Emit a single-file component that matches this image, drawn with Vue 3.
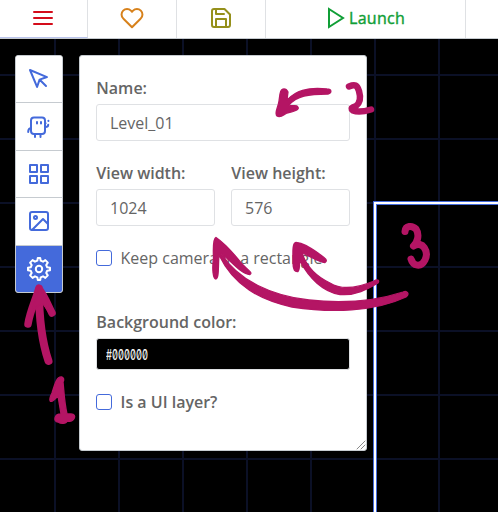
<script setup>
import { ref } from 'vue'

const levelName = ref('Level_01')
const viewWidth = ref('1024')
const viewHeight = ref('576')
const keepCamera = ref(false)
const uiLayer = ref(false)
const color = ref('#000000')
const tools = ['select', 'copies', 'tiles', 'backgrounds', 'settings']
const active = ref('settings')
</script>

<template>
  <div class="editor">
    <nav class="topbar">
      <button class="tab menu" aria-label="Menu">
        <svg viewBox="0 0 24 24"><path d="M3 12h18M3 6h18M3 18h18" /></svg>
      </button>
      <button class="tab heart" aria-label="Patrons">
        <svg viewBox="0 0 24 24"><path d="M20.84 4.61a5.5 5.5 0 0 0-7.78 0L12 5.67l-1.06-1.06a5.5 5.5 0 0 0-7.78 7.78l1.06 1.06L12 21.23l7.78-7.78 1.06-1.06a5.5 5.5 0 0 0 0-7.78z" /></svg>
      </button>
      <button class="tab save" aria-label="Save">
        <svg viewBox="0 0 24 24"><path d="M15.5 3H5a2 2 0 0 0-2 2v14a2 2 0 0 0 2 2h14a2 2 0 0 0 2-2V8.500zM7 3v5h8M7 21v-8h10v8" /></svg>
      </button>
      <button class="tab launch">
        <svg viewBox="0 0 24 24"><path d="M5 3l14 9-14 9z" /></svg>
        <span>Launch</span>
      </button>
      <div class="tab rest"></div>
    </nav>

    <main class="canvas">
      <div class="camera"></div>
      <aside class="toolbar">
        <button v-for="tool in tools" :key="tool" class="tool" :class="{ active: active === tool }" :aria-label="tool" @click="active = tool">
          <svg v-if="tool === 'select'" viewBox="0 0 24 24"><path d="M3 3l7.070 16.970 2.510-7.390 7.390-2.510zM13 13l6 6" /></svg>
          <svg v-else-if="tool === 'copies'" viewBox="0 0 24 24"><path d="M7 2.500h8a3 3 0 0 1 3 3V16a3 3 0 0 1-3 3H7a3 3 0 0 1-3-3V5.500a3 3 0 0 1 3-3zM10 7v1.600M14 7v1.600M8 20v2M13.500 20v2M4 13c-1.800.2-2.800 1.400-2.800 4M18.500 12c2 0 2.700-.6 2.700-2.200M18.500 8.300h.1M21.400 5.800v.1" /></svg>
          <svg v-else-if="tool === 'tiles'" viewBox="0 0 24 24"><path d="M3 3h7v7H3zM14 3h7v7h-7zM14 14h7v7h-7zM3 14h7v7H3z" /></svg>
          <svg v-else-if="tool === 'backgrounds'" viewBox="0 0 24 24"><rect x="3" y="3" width="18" height="18" rx="2" /><circle cx="8.500" cy="8.500" r="1.500" /><path d="M21 15l-5-5L5 21" /></svg>
          <svg v-else viewBox="0 0 24 24"><circle cx="12" cy="12" r="3.200" /><path d="M10.300 3.700 10.800 1h2.400l.5 2.700 2.300 1 2.300-1.600 2.500 2.500-1.600 2.400 1 2.300 2.800.5v2.400l-2.800.5-1 2.300 1.600 2.400-2.500 2.500-2.300-1.600-2.300 1-.5 2.700h-2.400l-.5-2.700-2.300-1-2.400 1.600-2.500-2.500 1.600-2.400-1-2.300L1 13.200v-2.400l2.700-.5 1-2.300-1.600-2.400 2.500-2.500L8 4.700z" /></svg>
        </button>
      </aside>

      <section class="panel">
        <label class="field name">
          <b>Name:</b>
          <input v-model="levelName" type="text" />
        </label>
        <div class="sizes">
          <label class="field"><b>View width:</b><input v-model="viewWidth" type="text" /></label>
          <label class="field"><b>View height:</b><input v-model="viewHeight" type="text" /></label>
        </div>
        <label class="check keep"><input v-model="keepCamera" type="checkbox" /><span>Keep camera in a rectangle</span></label>
        <div class="field background">
          <b>Background color:</b>
          <button class="swatch"><span>{{ color }}</span></button>
        </div>
        <label class="check ui"><input v-model="uiLayer" type="checkbox" /><b>Is a UI layer?</b></label>
        <svg class="grip" viewBox="0 0 10 10"><path d="M1 9 9 1M5 9 9 5" /></svg>
      </section>
    </main>

    <svg class="notes" viewBox="0 0 498 512">
      <path class="line head" d="M39 288C36 299 30 311 28 324M39 289C44 295 48 305 52 313" />
      <path class="line shaft" d="M39 290C39 316 41 339 48.500 361" />
      <path d="M39 288L31 316L37 306L43 304L50 314L46 298Z" />
      <path d="M62 377C57 376 55 383 52 393C48 401 50 404 55 399L58 396L61 414C54 414 53 422 58 422C61 424 66 424 67 421C74 423 78 414 71 414L67 414C64 400 64 390 63 382C64 380 64 378 62 377Z" />
      <path d="M284 89C280 89 280 94 279 101C278 108 274 113 277 116C281 118 283 115 287 113C292 112 300 110 298 107C297 104 292 107 289 105C297 96 308 94 328 94C332 93 332 89 327 89C306 87 296 91 287 100L288 92C287 90 286 89 284 89Z" />
      <path class="line two" d="M349 86.500C355 84 357 85 359 91C361 98 360 103 356 106Q349 108 353 110.500C359 113 366 111 371 109.500" />
      <path d="M216 237.500C214 238 213 247 213.500 258C212 269 213 279 216 279C219 278 218 268 219 255C234 286 260 300 292 307C331 313 374 312 406 297C410 294 407 290 403 292C375 301 344 304 309 300C273 296 238 281 221 253C231 261 242 275 250 274.500C253 273 248 270 242 264C234 254 227 245 216 237.500Z" />
      <path d="M296 242.500C292 243 293 253 293 263C293 270 295 272 298 271.500C300 270 299 264 300 261C309 278 323 292 340 294.500C355 296 368 289 378 283C380 280 377 279 374 281C355 289 341 290 330 283C315 276 306 265 302 253C310 256 320 263 325 262.500C329 260 323 257 318 253C309 247 303 243 296 242.500Z" />
      <path class="line digit" d="M405 231.500C405.500 225.500 412 225 416 229C420 235 417 243 413.500 246C423 240 429 252 425 260C421 268 413 266 411 259" />
    </svg>
  </div>
</template>

<style>
html, body { margin: 0; overflow: hidden; }
</style>

<style scoped>
* { box-sizing: border-box; }
.editor { position: relative; width: 498px; height: 512px; display: flex; flex-direction: column; font: 16px/24px "Open Sans", sans-serif; color: #656565; overflow: hidden; }
button { padding: 0; margin: 0; border: 0; background: white; font: inherit; }
svg { width: 24px; height: 24px; fill: none; stroke: currentColor; stroke-width: 2; stroke-linecap: round; stroke-linejoin: round; }
.topbar { flex: none; height: 39px; display: flex; background: white; border-bottom: 1px solid #c6cbd0; }
.tab { display: flex; align-items: center; justify-content: center; border-right: 1px solid #dfe1e4; }
.tab svg { margin-top: -2px; }
.menu { width: 88px; padding-right: 1px; color: #d40c1a; border-bottom: 1px solid #bac4ed; }
.menu svg { margin-top: -1px; }
.heart { width: 89px; padding-right: 1px; color: #d7811b; }
.save { width: 89px; justify-content: flex-start; padding-left: 32px; color: #95901b; }
.launch { width: 200px; justify-content: flex-start; padding-left: 58px; color: #109e36; }
.launch svg { stroke-linejoin: miter; }
.launch span { margin-top: -2px; padding-left: 1px; letter-spacing: .3px; -webkit-text-stroke: .4px currentColor; }
.rest { flex: 1; border: 0; }
.canvas { position: relative; flex: 1; display: flex; align-items: flex-start; gap: 16px; padding: 16px 0 0 15px; background-color: #000; background-image: linear-gradient(90deg, #0b1026 2px, transparent 2px), linear-gradient(#0b1026 2px, transparent 2px); background-size: 64px 64px; background-position: 54px 35px; }
.camera { position: absolute; left: 373px; top: 162px; width: 200px; height: 400px; border: 1px solid #446adb; box-shadow: inset 0 0 0 2px white, inset 0 0 0 3px #446adb; }
.toolbar { position: relative; width: 48px; height: 238px; flex: none; display: flex; flex-direction: column; border: 1px solid #c6cbd0; border-radius: 3px; overflow: hidden; background: white; }
.tool { flex: 1; display: flex; align-items: center; justify-content: center; padding-right: 1px; color: #446adb; border-bottom: 1px solid #c6cbd0; }
.tool:last-child { border: 0; }
.tool.active { background: #446adb; color: white; }
.panel { position: relative; width: 288px; height: 396px; padding: 20px 16px 0; border: 1px solid #c6cbd0; border-radius: 3px; background: white; }
.field { display: flex; flex-direction: column; }
b { font-weight: 600; }
.field b { padding-left: .3px; }
.field input { width: 100%; height: 37px; margin-top: 4px; padding: 0 13px; border: 1px solid #dfe1e4; border-radius: 3px; font: inherit; color: #656565; outline: none; }
.sizes { display: grid; grid-template-columns: 119px 119px; gap: 16px; margin-top: 20px; }
.check { display: flex; align-items: center; gap: 8.5px; white-space: nowrap; }
.check input { appearance: none; width: 16px; height: 16px; margin: 0; border: 1px solid #446adb; border-radius: 3px; background: white; }
.keep { margin-top: 20px; }
.background { margin-top: 40px; }
.swatch { height: 32px; margin-top: 4px; padding-left: 8.5px; background: #000; color: #eee; border: 1px solid #dfe1e4; border-radius: 3px; text-align: left; }
.swatch span { display: inline-block; transform: scaleX(.64); transform-origin: left; font: 500 14.5px/24px Inter, sans-serif; font-feature-settings: "tnum", "zero"; }
.ui { margin-top: 20px; }
.grip { position: absolute; right: 0; bottom: 0; width: 10px; height: 10px; stroke-width: .7; color: #555; }
.notes { position: absolute; left: 0; top: 0; width: 498px; height: 512px; fill: #b41564; stroke: #b41564; stroke-width: 1.3; pointer-events: none; }
.notes .line { fill: none; }
.notes .head { stroke-width: 7.500; }
.notes .shaft { stroke-width: 8; }
.notes .two { stroke-width: 6.500; }
.notes .digit { stroke-width: 7; }
</style>
